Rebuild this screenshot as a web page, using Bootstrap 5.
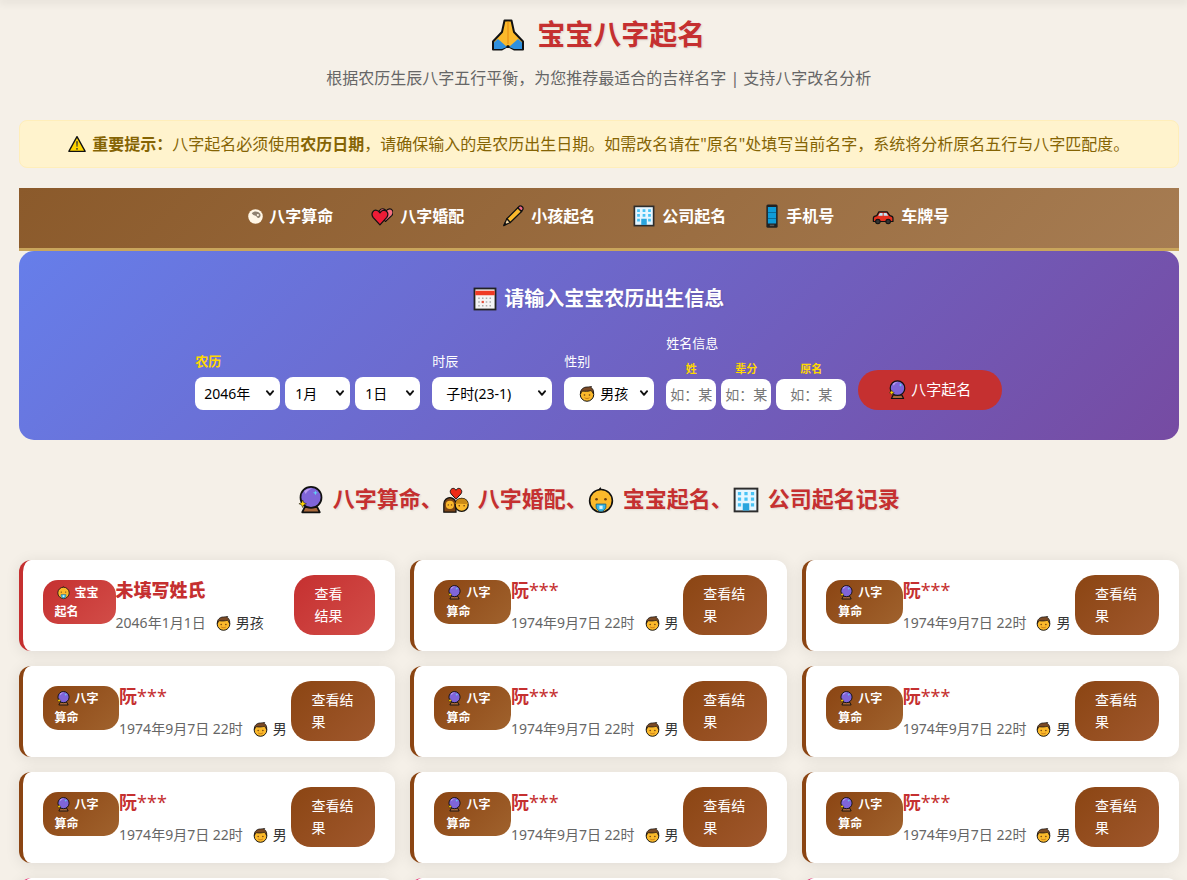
<!DOCTYPE html>
<html lang="zh-CN">
<head>
  <meta charset="UTF-8">
  <title>宝宝八字起名</title>
  <link rel="stylesheet" href="https://cdn.jsdelivr.net/npm/bootstrap@5.3.0/dist/css/bootstrap.min.css">
  <style>
    body {
      background-color: #f5f0e8;
      color: #333;
      font-family: "Noto Sans", "Noto Sans CJK SC", sans-serif;
      line-height: 1.6;
    }
    .top-fade {
      height: 0;
      box-shadow: 0 0 10px 2px rgba(0, 0, 0, .12);
    }
    .page-wrap {
      width: 1160.4px;
      margin-left: 18.6px;
    }
    .emo {
      display: inline-block;
      vertical-align: -.18em;
    }
    .gap-five { gap: 5px; }

    .site-head {
      padding-top: 12px;
      margin-bottom: 28.4px;
    }
    .site-head h1 {
      color: #c53030;
      font-size: 28px;
      font-weight: 700;
      line-height: 44px;
      margin: 0 0 10px;
      text-shadow: 1px 1px 2px rgba(0, 0, 0, .1);
    }
    .site-head h1 .emo { width: 32px; height: 32px; margin-right: 13px; vertical-align: -6px; }
    .site-head p { color: #666; font-size: 16px; margin: 0; }

    .notice-box {
      background: #fff3cd;
      border: 1px solid #ffeeba;
      border-radius: 8px;
      color: #856404;
      font-size: 16px;
      margin-bottom: 20px;
      padding: 11px 20px 9px;
      text-align: center;
    }
    .notice-box .emo { width: 18px; height: 18px; margin-right: 6px; vertical-align: -3px; }

    .tool-nav {
      background: linear-gradient(135deg, #8b5a2b, #a67c52);
      border-bottom: 3px solid #c9a55c;
      gap: 8px;
      padding: 16px 0 18.4px;
    }
    .tool-nav .nav-link {
      color: #fff;
      font-size: 16px;
      font-weight: 700;
      padding: 0 15px;
    }
    .tool-nav .emo { width: 22px; height: 22px; margin-right: 7px; vertical-align: -5px; }
    .tool-nav .emo-yin { width: 15px; height: 15px; margin-right: 6px; vertical-align: -2px; }
    .tool-nav .emo-phone { width: 12px; height: 24px; margin: 0 8px 0 2px; vertical-align: -6px; }

    .form-panel {
      background: linear-gradient(135deg, #667eea, #764ba2);
      border-radius: 15px;
      color: #fff;
      padding: 32px 20px 30px;
    }
    .form-panel h3 {
      font-size: 20px;
      font-weight: 700;
      line-height: 32px;
      margin: 0 0 18px;
      text-align: center;
      text-shadow: 1px 1px 2px rgba(0, 0, 0, .1);
    }
    .form-panel h3 .emo { width: 24px; height: 24px; margin-right: 7px; vertical-align: -5px; }
    .fld-label {
      display: block;
      font-size: 13px;
      line-height: 21px;
      margin-bottom: 5px;
    }
    .fld-label-name { margin-bottom: 6px; }
    .fld-gold { color: #ffd700; font-weight: 700; }
    .fld-sub {
      color: #ffd700;
      display: block;
      font-size: 11px;
      font-weight: 700;
      line-height: 17px;
      margin-bottom: 2px;
      text-align: center;
    }
    .form-panel .form-select {
      background-image: url("data:image/svg+xml,%3csvg xmlns='http://www.w3.org/2000/svg' viewBox='0 0 16 16'%3e%3cpath fill='none' stroke='%23111' stroke-linecap='round' stroke-linejoin='round' stroke-width='3' d='m3 5 5 6 5-6'/%3e%3c/svg%3e");
      background-position: right 5px center;
      background-size: 10px 10px;
      border: 0;
      border-radius: 8px;
      color: #000;
      font-size: 14px;
      height: 33px;
      line-height: 33px;
      padding: 0 16px 0 9px;
      text-align: left;
    }
    .sel-year { width: 85px; }
    .form-panel .sel-mon { width: 65px; padding-left: 10px; }
    .form-panel .sel-hour { width: 120px; padding-left: 14px; }
    .form-panel .sel-sex { width: 90px; padding-left: 15px; white-space: nowrap; }
    .sel-sex .emo { width: 16px; height: 16px; margin-right: 5px; vertical-align: -3px; }
    .form-panel .form-control {
      border: 0;
      border-radius: 8px;
      font-size: 14px;
      height: 31px;
      padding: 0 4px;
      text-align: center;
    }
    .form-control::placeholder { color: #777; }
    .name-short { width: 50px; }
    .name-long { width: 70px; }
    .go-btn {
      background: #c53030;
      border: 0;
      border-radius: 20px;
      color: #fff;
      font-size: 15px;
      height: 40px;
      margin-left: 4px;
      padding: 0;
      width: 144px;
    }
    .go-btn:hover { background: #b02a2a; color: #fff; }
    .go-btn .emo { width: 17px; height: 20px; margin-right: 5px; vertical-align: -5px; }

    .rec-title {
      color: #c53030;
      font-size: 22px;
      font-weight: 700;
      line-height: 35px;
      margin: 41px 0 44px;
      text-align: center;
      text-shadow: 1px 1px 2px rgba(0, 0, 0, .1);
    }
    .rec-title .emo { width: 26px; height: 28px; margin-right: 9px; vertical-align: -7px; }

    .rec-grid {
      display: grid;
      gap: 15px;
      grid-template-columns: repeat(3, 1fr);
      padding-bottom: 20px;
    }
    .rec-card {
      background: #fff;
      border: 0;
      border-left: 4px solid #8b4513;
      border-radius: 12px;
      box-shadow: 0 2px 15px rgba(0, 0, 0, .09);
      height: 91px;
      padding: 0 20px;
    }
    .rec-tag {
      background: linear-gradient(135deg, #8b4513, #a0622d);
      border-radius: 15px;
      color: #fff;
      flex: 0 0 auto;
      font-size: 12px;
      font-weight: 700;
      line-height: 19px;
      margin-bottom: 7px;
      padding: 3px 12px;
      width: 76.5px;
    }
    .rec-tag .emo { width: 13px; height: 15px; margin: 0 5px 0 2px; vertical-align: -3px; }
    .rec-info { flex: 1 1 auto; min-width: 0; white-space: nowrap; }
    .rec-name {
      color: #c53030;
      font-size: 18px;
      font-weight: 700;
      line-height: 29px;
      margin-bottom: 7px;
    }
    .rec-meta { color: #666; font-size: 14px; line-height: 22px; }
    .rec-sex { color: #333; }
    .rec-sex .emo { width: 15px; height: 15px; margin: 0 5px 0 10px; vertical-align: -3px; }
    .rec-btn {
      background: linear-gradient(135deg, #8b4513, #a0582d);
      border: 0;
      border-radius: 20px;
      color: #fff;
      flex: 0 0 auto;
      font-size: 14px;
      line-height: 22.4px;
      padding: 8px 20px;
      text-align: left;
      width: 84px;
    }
    .rec-btn:hover { color: #fff; }
    .rec-baby { border-left-color: #c53030; }
    .rec-baby .rec-tag { background: linear-gradient(135deg, #c53030, #d24d48); width: 73px; }
    .rec-baby .rec-btn { background: linear-gradient(135deg, #c53030, #d24d48); width: 81px; }
    .rec-love { border-left-color: #e6397a; }
  </style>
</head>
<body>
  <!-- emoji drawn by hand, no emoji font on the box -->
  <svg class="d-none" xmlns="http://www.w3.org/2000/svg">
    <symbol id="i-pray" viewBox="0 0 32 32">
      <path d="M12.5 1.5h7L22 13l9 9.5v8h-9L16 27l-6 3.5H1v-8L10 13z" fill="#fbb92b" stroke="#111" stroke-width="2" stroke-linejoin="round"/>
      <path d="M15.5 2.5h1V25h-1z" fill="#e58a10"/>
      <path d="M2 23.5l4-3.5 9 8-5 2H2zM30 23.5L26 20l-9 8 5 2h8z" fill="#2f90de"/>
    </symbol>
    <symbol id="i-warn" viewBox="0 0 32 32">
      <path d="M16 3L30.5 29h-29z" fill="#ffd400" stroke="#111" stroke-width="2.4" stroke-linejoin="round"/>
      <path d="M14.6 11h2.8l-.6 10h-1.6z" fill="#333"/>
      <circle cx="16" cy="24.5" r="1.6" fill="#333"/>
    </symbol>
    <symbol id="i-yin" viewBox="0 0 32 32">
      <circle cx="16" cy="16" r="15.5" fill="#fff6e6"/>
      <path d="M8 9c5-5 13-5 18 1 2 4 0 9-4 9-3 0-3-3-5-4-3-2-6-1-9-6z" fill="#8e8070"/>
      <circle cx="21" cy="13" r="2.4" fill="#fff6e6"/>
    </symbol>
    <symbol id="i-hearts" viewBox="0 0 32 32">
      <path d="M21 24l-8-9c-4-5 1-11 6-9 2 .7 2.500 2 3 3 .6-1 1.500-2.500 3.500-3 5-1.500 8.500 4 5 9z" fill="#f4707f" stroke="#111" stroke-width="1.600" stroke-linejoin="round"/>
      <path d="M13 29L3 18c-4-6 1-12 6-10 2.500.8 3.300 2.500 4 3.500.7-1 1.700-2.800 4-3.500 5-1.600 10 4 6 10z" fill="#ee1c36" stroke="#111" stroke-width="1.800" stroke-linejoin="round"/>
    </symbol>
    <symbol id="i-pencil" viewBox="0 0 32 32">
      <path d="M7 20L23 4l5.500 5.500L12 25.500z" fill="#fbb92b" stroke="#111" stroke-width="1.800" stroke-linejoin="round"/>
      <path d="M7 20l5 5.500L2.500 30z" fill="#f5d9a8" stroke="#111" stroke-width="1.800" stroke-linejoin="round"/>
      <path d="M2.500 30l1.500-5 3.500 3.300z" fill="#111"/>
      <path d="M23 4l2.500-2.500c1.500-.8 3 0 4 1 1.200 1.200 1.500 2.800.8 4L28.500 9.500z" fill="#f06a8a" stroke="#111" stroke-width="1.800" stroke-linejoin="round"/>
    </symbol>
    <symbol id="i-tower" viewBox="0 0 32 32">
      <rect x="2" y="2" width="28" height="28" fill="#e6f6ff" stroke="#2d2d2d" stroke-width="2.400"/>
      <path d="M6 6h4v4H6zM14 6h4v4h-4zM22 6h4v4h-4zM6 13h4v4H6zM14 13h4v4h-4zM22 13h4v4h-4zM6 20h4v4H6zM22 20h4v4h-4z" fill="#49c3f5"/>
      <path d="M12 20h8v9h-8z" fill="#2aa5de"/>
    </symbol>
    <symbol id="i-phone" viewBox="8 0 16 32">
      <rect x="8.500" y=".5" width="15" height="31" rx="2" fill="#222"/>
      <rect x="10.500" y="4" width="11" height="22" fill="#0f9bd7"/>
      <path d="M10.500 11h11v1h-11zM10.500 19h11v1h-11z" fill="#0a5f88"/>
      <rect x="13" y="27.500" width="6" height="2" fill="#555"/>
    </symbol>
    <symbol id="i-car" viewBox="0 0 32 32">
      <path d="M2 24v-5c0-2 2-3 5-3.500L10 10h12l4 5.500c3 .5 4.500 1.500 4.500 3.500v5z" fill="#e5301f" stroke="#111" stroke-width="1.800" stroke-linejoin="round"/>
      <path d="M11.500 11.500h4v4h-6.300zM17 11.500h4l2.500 4H17z" fill="#bfe8f7"/>
      <circle cx="8.500" cy="24" r="3.300" fill="#333" stroke="#111" stroke-width="1.500"/>
      <circle cx="23.500" cy="24" r="3.300" fill="#333" stroke="#111" stroke-width="1.500"/>
    </symbol>
    <symbol id="i-calendar" viewBox="0 0 32 32">
      <rect x="2" y="2" width="28" height="28" fill="#f4f4f4" stroke="#222" stroke-width="2.400"/>
      <rect x="3" y="5" width="26" height="6" fill="#ef3a24"/>
      <path d="M7 14h2v2H7zM12 14h2v2h-2zM17 14h2v2h-2zM22 14h2v2h-2zM7 19h2v2H7zM17 19h2v2h-2zM22 19h2v2h-2zM7 24h2v2H7zM12 24h2v2h-2zM17 24h2v2h-2zM22 24h2v2h-2z" fill="#aaa"/>
      <path d="M11.500 18.500h3v3h-3z" fill="#e2503c"/>
    </symbol>
    <symbol id="i-ball" viewBox="0 0 28 32">
      <path d="M7 24h14l3 6H4z" fill="#a9683a" stroke="#111" stroke-width="2" stroke-linejoin="round"/>
      <circle cx="14" cy="13" r="12" fill="#7f65d8" stroke="#111" stroke-width="2"/>
      <path d="M6 6c3-3 7-3.500 9-3-3 1-6 3-7 6z" fill="#b89cf0"/>
      <path d="M4.500 16l1.300 3 3 1.300-3 1.300-1.300 3-1.300-3-3-1.300 3-1.300z" fill="#ffd400" stroke="#111" stroke-width=".6"/>
      <path d="M19 5l.8 2 2 .8-2 .8-.8 2-.8-2-2-.8 2-.8z" fill="#5fd3f5"/>
    </symbol>
    <symbol id="i-boy" viewBox="0 0 32 32">
      <circle cx="16" cy="17" r="13.500" fill="#fbb92b" stroke="#111" stroke-width="2"/>
      <path d="M3 16C2 7 9 2 16 2c4 0 6-1 9-1-1 1-1 2-1 2 4 2 6 7 5 13-2-3-3-6-5-7-5 2-13 2-17 1-2 2-3 4-4 6z" fill="#7a4a26" stroke="#111" stroke-width="1.500" stroke-linejoin="round"/>
      <circle cx="11" cy="18" r="1.600" fill="#6b3d10"/>
      <circle cx="21" cy="18" r="1.600" fill="#6b3d10"/>
      <path d="M11 23.500c3 2 7 2 10 0" fill="none" stroke="#b5650f" stroke-width="1.500"/>
    </symbol>
    <symbol id="i-baby" viewBox="0 0 32 32">
      <path d="M16 1c-2 1-2 2-1 3" fill="none" stroke="#111" stroke-width="1.600"/>
      <circle cx="16" cy="17" r="14" fill="#fbb92b" stroke="#111" stroke-width="2"/>
      <circle cx="10.500" cy="15" r="1.600" fill="#6b3d10"/>
      <circle cx="21.500" cy="15" r="1.600" fill="#6b3d10"/>
      <path d="M10 21h12v4c-1 3-3 5-6 5s-5-2-6-5z" fill="#39b7e6" stroke="#1a5c78" stroke-width="1"/>
      <rect x="14" y="23" width="4" height="4" fill="#d9f3fb"/>
    </symbol>
    <symbol id="i-couple" viewBox="0 0 32 32">
      <path d="M16 15L10 8.500C7 4.500 11 .5 14 2c1 .5 1.600 1.200 2 2 .4-.8 1-1.500 2-2 3-1.500 7 2.500 4 6.500z" fill="#ee2b16" stroke="#111" stroke-width="1.200"/>
      <path d="M1 31V21c0-5 4-8 7.500-8s7.500 3 7.500 8v10z" fill="#7a4517" stroke="#111" stroke-width="1.500"/>
      <circle cx="8.500" cy="22" r="5" fill="#fbb92b"/>
      <circle cx="23" cy="22" r="8" fill="#fbb92b" stroke="#111" stroke-width="1.500"/>
      <path d="M15 21c1-5 4-7 8-7s7 2 8 7c-5 0-11-1-16 0z" fill="#c98a16"/>
      <circle cx="6.500" cy="22" r=".9" fill="#6b3d10"/>
      <circle cx="10.500" cy="22" r=".9" fill="#6b3d10"/>
      <circle cx="20" cy="23" r="1" fill="#6b3d10"/>
      <circle cx="26" cy="23" r="1" fill="#6b3d10"/>
    </symbol>
  </svg>

  <div class="top-fade"></div>
  <div class="page-wrap">

    <header class="site-head text-center">
      <h1><svg class="emo"><use href="#i-pray"/></svg>宝宝八字起名</h1>
      <p>根据农历生辰八字五行平衡，为您推荐最适合的吉祥名字 | 支持八字改名分析</p>
    </header>

    <div class="notice-box">
      <svg class="emo"><use href="#i-warn"/></svg><strong>重要提示：</strong>八字起名必须使用<strong>农历日期</strong>，请确保输入的是农历出生日期。如需改名请在"原名"处填写当前名字，系统将分析原名五行与八字匹配度。
    </div>

    <nav class="nav tool-nav justify-content-center">
      <a class="nav-link" href="#"><svg class="emo emo-yin"><use href="#i-yin"/></svg>八字算命</a>
      <a class="nav-link" href="#"><svg class="emo"><use href="#i-hearts"/></svg>八字婚配</a>
      <a class="nav-link" href="#"><svg class="emo"><use href="#i-pencil"/></svg>小孩起名</a>
      <a class="nav-link" href="#"><svg class="emo"><use href="#i-tower"/></svg>公司起名</a>
      <a class="nav-link" href="#"><svg class="emo emo-phone"><use href="#i-phone"/></svg>手机号</a>
      <a class="nav-link" href="#"><svg class="emo"><use href="#i-car"/></svg>车牌号</a>
    </nav>

    <section class="form-panel">
      <h3><svg class="emo"><use href="#i-calendar"/></svg>请输入宝宝农历出生信息</h3>
      <form class="d-flex justify-content-center align-items-end gap-2" onsubmit="return false">
        <div class="me-1">
          <label class="fld-label fld-gold">农历</label>
          <div class="d-flex gap-five">
            <select class="form-select sel-year"><option>2046年</option><option>2045年</option></select>
            <select class="form-select sel-mon"><option>1月</option><option>2月</option></select>
            <select class="form-select sel-mon"><option>1日</option><option>2日</option></select>
          </div>
        </div>
        <div class="me-1">
          <label class="fld-label">时辰</label>
          <select class="form-select sel-hour"><option>子时(23-1)</option><option>丑时(1-3)</option></select>
        </div>
        <div class="me-1">
          <label class="fld-label">性别</label>
          <div class="dropdown">
            <button type="button" class="form-select sel-sex" data-bs-toggle="dropdown"><svg class="emo"><use href="#i-boy"/></svg>男孩</button>
            <ul class="dropdown-menu">
              <li><a class="dropdown-item" href="#">男孩</a></li>
              <li><a class="dropdown-item" href="#">女孩</a></li>
            </ul>
          </div>
        </div>
        <div>
          <label class="fld-label fld-label-name">姓名信息</label>
          <div class="d-flex gap-five">
            <div><span class="fld-sub">姓</span><input class="form-control name-short" placeholder="如：某"></div>
            <div><span class="fld-sub">辈分</span><input class="form-control name-short" placeholder="如：某"></div>
            <div><span class="fld-sub">原名</span><input class="form-control name-long" placeholder="如：某"></div>
          </div>
        </div>
        <button type="submit" class="btn go-btn"><svg class="emo"><use href="#i-ball"/></svg>八字起名</button>
      </form>
    </section>

    <h2 class="rec-title"><svg class="emo"><use href="#i-ball"/></svg>八字算命、<svg class="emo"><use href="#i-couple"/></svg>八字婚配、<svg class="emo"><use href="#i-baby"/></svg>宝宝起名、<svg class="emo"><use href="#i-tower"/></svg>公司起名记录</h2>

    <div class="rec-grid" id="recGrid"></div>
  </div>

  <script src="https://cdn.jsdelivr.net/npm/bootstrap@5.3.0/dist/js/bootstrap.bundle.min.js"></script>
  <script>
    const records = [
      { kind: "baby", icon: "i-baby", tag: "宝宝起名", name: "<strong>未填写姓氏</strong>", date: "2046年1月1日", sex: "男孩" }
    ];
    for (let i = 0; i < 8; i++) {
      records.push({ kind: "", icon: "i-ball", tag: "八字算命", name: "阮<span class=\"fw-normal\">***</span>", date: "1974年9月7日 22时", sex: "男" });
    }
    for (let i = 0; i < 3; i++) {
      records.push({ kind: "love", icon: "i-couple", tag: "八字婚配", name: "阮***", date: "1974年9月7日", sex: "男" });
    }

    document.getElementById("recGrid").innerHTML = records.map(r => `
      <div class="card rec-card flex-row align-items-center ${r.kind ? "rec-" + r.kind : ""}">
        <span class="rec-tag"><svg class="emo"><use href="#${r.icon}"/></svg>${r.tag}</span>
        <div class="rec-info">
          <div class="rec-name">${r.name}</div>
          <div class="rec-meta">${r.date}<span class="rec-sex"><svg class="emo"><use href="#i-boy"/></svg>${r.sex}</span></div>
        </div>
        <button type="button" class="btn rec-btn">查看结果</button>
      </div>`).join("");
  </script>
</body>
</html>
